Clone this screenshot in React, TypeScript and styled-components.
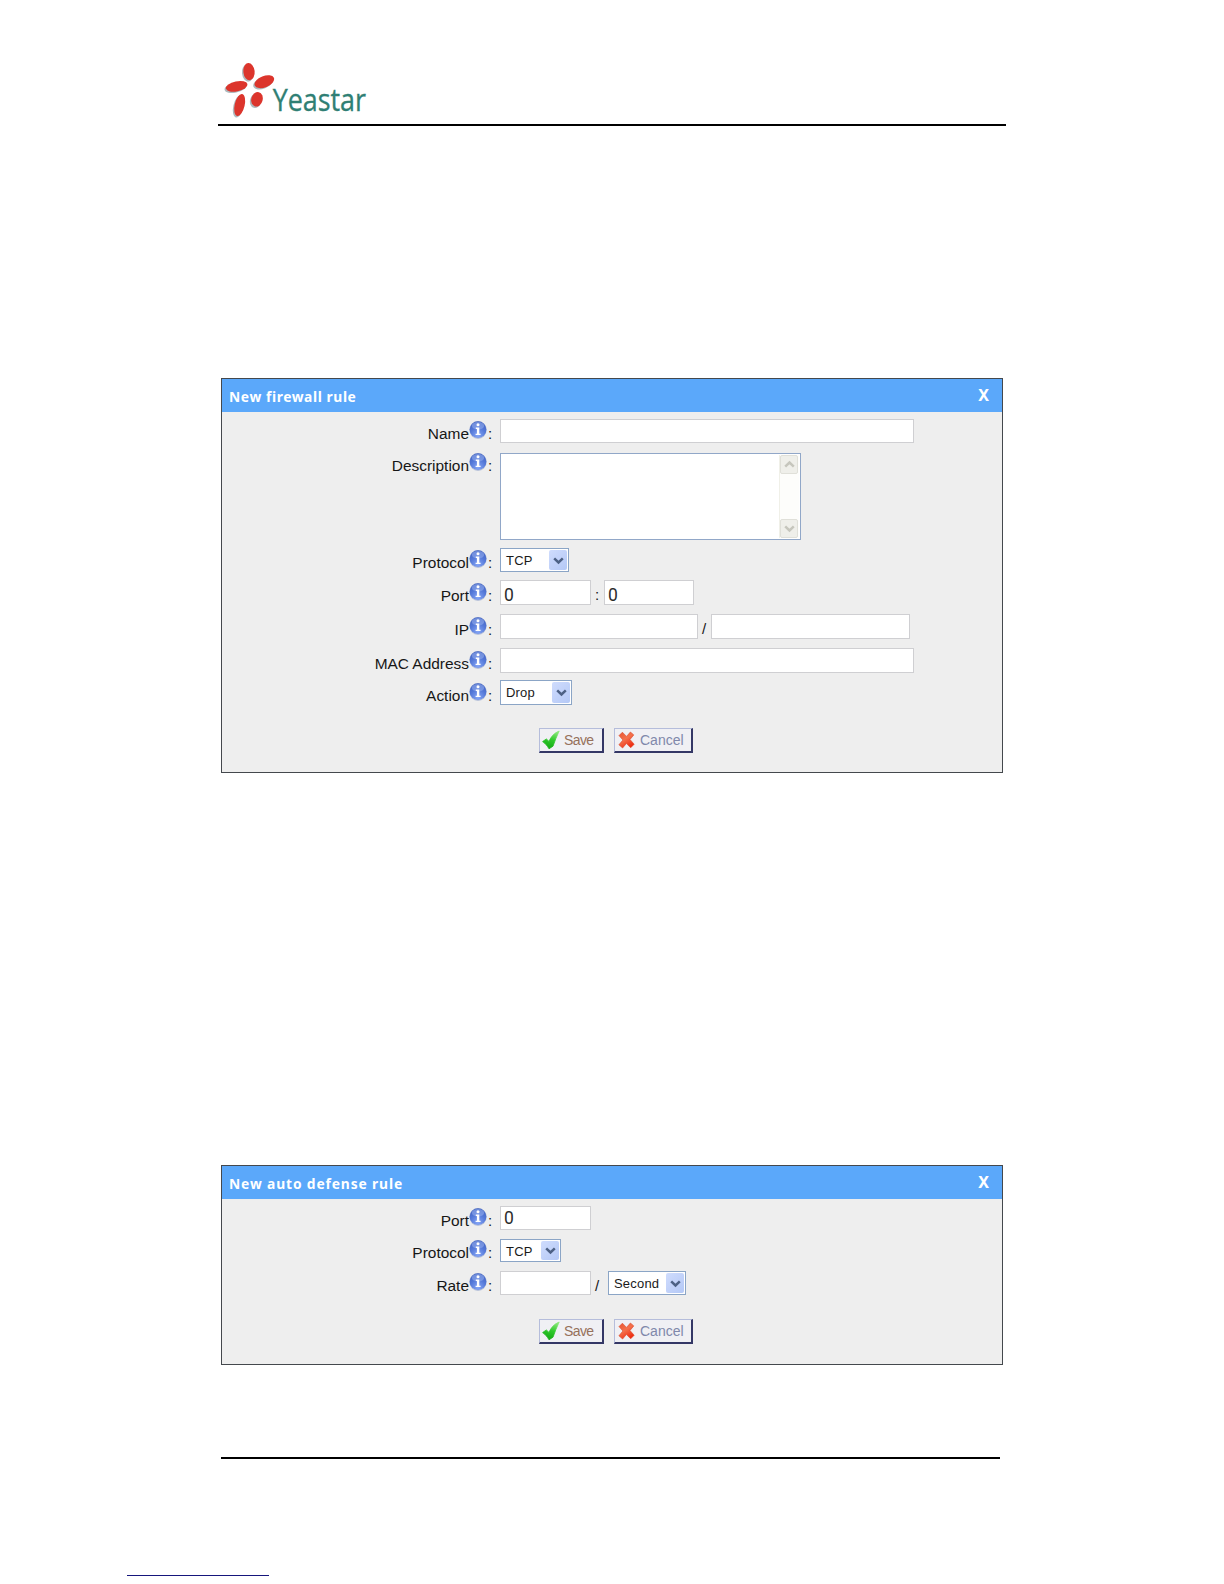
import React from 'react'
import styled, { createGlobalStyle } from 'styled-components'

interface Field {
  label: string
  // 行高度、下边距以及标签的垂直偏移
  height: number
  gap: number
  shift: number
  control: React.ReactNode
}

const InfoIcon = () => (
  <svg width="18" height="19" viewBox="0 0 18 19">
    <defs>
      <radialGradient id="infoFill" cx="0.5" cy="0.85" r="0.85">
        <stop offset="0" stopColor="#86a6f6" />
        <stop offset="0.55" stopColor="#5478d8" />
        <stop offset="1" stopColor="#4263c0" />
      </radialGradient>
    </defs>
    <ellipse cx="9" cy="10" rx="8.7" ry="8.9" fill="#b9c3da" />
    <circle cx="9" cy="9.6" r="8.4" fill="url(#infoFill)" />
    <ellipse cx="9" cy="5.8" rx="6.2" ry="3.9" fill="#9db5f2" opacity="0.5" />
    <circle cx="9" cy="4.8" r="1.5" fill="#fff" />
    <path d="M6.8 7.5h3.5v6.2h1.3v1.4H6.6v-1.4h1.3V8.9H6.8z" fill="#fff" />
  </svg>
)

const CheckIcon = () => (
  <svg width="18" height="20" viewBox="0 0 18 20">
    <defs>
      <linearGradient id="checkFill" x1="0.7" y1="0" x2="0.4" y2="1">
        <stop offset="0" stopColor="#8be87a" />
        <stop offset="0.5" stopColor="#2fc92b" />
        <stop offset="1" stopColor="#14a914" />
      </linearGradient>
    </defs>
    <path
      d="M0.6 11.6L4.3 8.9L7 11.4C8.8 7 12 3 17.2 1C14.8 6 12.8 11 11 16.2L7 18.8C5.4 15.9 3.2 13.4 0.6 11.6Z"
      fill="url(#checkFill)"
      stroke="url(#checkFill)"
      strokeWidth="0.8"
      strokeLinejoin="round"
    />
  </svg>
)

const CrossIcon = () => (
  <svg width="19" height="18" viewBox="-1 0 19 18">
    <defs>
      <linearGradient id="crossFill" x1="0" y1="0" x2="0.6" y2="1">
        <stop offset="0" stopColor="#e8532f" />
        <stop offset="0.5" stopColor="#f4714c" />
        <stop offset="1" stopColor="#ee2c12" />
      </linearGradient>
    </defs>
    <path
      d="M4.4 1.2L8.5 5.4L12.4 1L15.8 3.9L12 8.5L16.2 13.2L12.7 16.8L8.4 12.5L4.6 17L0.9 13.8L4.9 9L1 4.6Z"
      fill="url(#crossFill)"
      stroke="#d9482c"
      strokeWidth="0.6"
      strokeLinejoin="round"
    />
  </svg>
)

const Chevron = ({ up, color }: { up?: boolean; color: string }) => (
  <svg width="11" height="9" viewBox="0 0 11 9">
    <path d={up ? 'M1.2 6.6L5.5 2.5L9.8 6.6' : 'M1.2 2.4L5.5 6.5L9.8 2.4'} fill="none" stroke={color} strokeWidth="2.5" />
  </svg>
)

const Petals = () => (
  <>
    <ellipse cx="117" cy="65" rx="17" ry="26" transform="rotate(-6 117 65)" />
    <ellipse cx="163" cy="95" rx="31" ry="17" transform="rotate(-22 163 95)" />
    <ellipse cx="80" cy="109" rx="33" ry="15" transform="rotate(-12 80 109)" />
    <ellipse cx="89" cy="165" rx="15" ry="34" transform="rotate(13 89 165)" />
    <ellipse cx="141" cy="148" rx="17" ry="22" transform="rotate(15 141 148)" />
  </>
)

const Logo = () => (
  <LogoSvg width="180" height="74" viewBox="0 0 540 222">
    <g fill="#8d9da3" opacity="0.7" transform="translate(-4 4)">
      <Petals />
    </g>
    <g fill="#dc352c">
      <Petals />
    </g>
    <text
      x="188"
      y="182"
      fontFamily="'Open Sans', sans-serif"
      fontSize="93"
      fill="#2f7f74"
      stroke="#2f7f74"
      strokeWidth="1"
      textLength="280"
      lengthAdjust="spacingAndGlyphs"
    >
      Yeastar
    </text>
  </LogoSvg>
)

interface TextBoxProp {
  width: number
  height: number
  value?: string
  raised?: boolean
}
const TextBox = (prop: TextBoxProp) => (
  <TextInput $width={prop.width} $height={prop.height} $raised={prop.raised} type="text" defaultValue={prop.value} />
)

const Select = ({ value, width, height }: { value: string; width: number; height: number }) => (
  <SelectBox $width={width} $height={height}>
    <span>{value}</span>
    <SelectArrow>
      <Chevron color="#4d6185" />
    </SelectArrow>
  </SelectBox>
)

const DescriptionArea = () => (
  <AreaBox>
    <Area />
    <ScrollTrack>
      <ScrollButton>
        <Chevron up color="#c6c6bd" />
      </ScrollButton>
      <ScrollButton>
        <Chevron color="#c6c6bd" />
      </ScrollButton>
    </ScrollTrack>
  </AreaBox>
)

interface DialogProp {
  title: string
  spacing: number
  height: number
  fields: Field[]
}
const RuleDialog = (prop: DialogProp) => (
  <Dialog $height={prop.height}>
    <TitleBar>
      <Title $spacing={prop.spacing}>{prop.title}</Title>
      <CloseButton>X</CloseButton>
    </TitleBar>
    <Form>
      {prop.fields.map((field) => (
        <Row key={field.label} $height={field.height} $gap={field.gap}>
          <Label $shift={field.shift}>
            <LabelText>{field.label}</LabelText>
            <InfoIcon />
            <Colon>:</Colon>
          </Label>
          {field.control}
        </Row>
      ))}
      <Buttons>
        <Button $width={65} $color="#96705c" $spacing={-0.6}>
          <CheckIcon />
          Save
        </Button>
        <Button $width={79} $color="#8088ab" $spacing={0}>
          <CrossIcon />
          Cancel
        </Button>
      </Buttons>
    </Form>
  </Dialog>
)

const App = () => (
  <>
    <GlobalStyle />
    <Page>
      <Header>
        <Logo />
      </Header>
      <RuleDialog title="New firewall rule" spacing={0.6} height={395} fields={firewallFields} />
      <DialogGap />
      <RuleDialog title="New auto defense rule" spacing={0.87} height={200} fields={defenseFields} />
      <FooterRule />
      <LinkRule />
    </Page>
  </>
)

const GlobalStyle = createGlobalStyle`
  * {
    box-sizing: border-box;
  }
  body {
    margin: 0;
    background: #fff;
    font-family: 'Liberation Sans', Arial, sans-serif;
  }
  svg {
    display: block;
    flex-shrink: 0;
  }
`
const Page = styled.div`
  width: 1224px;
  height: 1584px;
  padding-top: 50px;
  overflow: hidden;
`
const Header = styled.header`
  width: 788px;
  margin: 0 0 252px 218px;
  border-bottom: 2px solid #000;
`
const LogoSvg = styled.svg`
  margin-left: -8px;
`
const Dialog = styled.section<{ $height: number }>`
  width: 782px;
  height: ${(props) => props.$height}px;
  margin-left: 221px;
  background: #eee;
  border: 1px solid #44484d;
`
const DialogGap = styled.div`
  height: 392px;
`
const TitleBar = styled.div`
  display: flex;
  justify-content: space-between;
  height: 33px;
  padding: 0 13px 0 7px;
  background: #5ba8fa;
  color: #fff;
`
const Title = styled.h2<{ $spacing: number }>`
  margin: 0;
  font: bold 13.8px/35px 'Noto Sans', sans-serif;
  letter-spacing: ${(props) => props.$spacing}px;
`
const CloseButton = styled.span`
  font: bold 16px/33px 'Noto Sans', sans-serif;
  cursor: pointer;
`
const Form = styled.div`
  padding-top: 7px;
`
const Row = styled.div<{ $height: number; $gap: number }>`
  display: flex;
  height: ${(props) => props.$height}px;
  margin-bottom: ${(props) => props.$gap}px;
`
const Label = styled.label<{ $shift: number }>`
  display: flex;
  justify-content: flex-end;
  width: 278px;
  height: 24px;
  margin-top: ${(props) => props.$shift}px;
  padding-right: 7px;
  color: #161616;
`
const LabelText = styled.span`
  font-size: 15.45px;
  line-height: 28px;
`
const Colon = styled.span`
  width: 6px;
  padding-left: 1px;
  font-size: 15px;
  line-height: 28px;
`
const TextInput = styled.input<{ $width: number; $height: number; $raised?: boolean }>`
  width: ${(props) => props.$width}px;
  height: ${(props) => props.$height}px;
  padding: ${(props) => (props.$raised ? '0 3px 1px' : '4px 3px 0')};
  border: 1px solid #cfcfd2;
  border-radius: 0;
  background: #fff;
  color: #2c2c2c;
  font: 17.5px Roboto, sans-serif;
  outline: none;
`
const Separator = styled.span<{ $width: number }>`
  width: ${(props) => props.$width}px;
  padding-left: 4px;
  font-size: 15px;
  line-height: 29px;
  color: #161616;
`
const SelectBox = styled.div<{ $width: number; $height: number }>`
  display: flex;
  justify-content: space-between;
  width: ${(props) => props.$width}px;
  height: ${(props) => props.$height}px;
  padding: 1px 1px 1px 5px;
  border: 1px solid #8ba5c6;
  background: #fff;
  color: #1a1a1a;
  font-size: 13px;
  line-height: 22px;
  letter-spacing: 0.2px;
`
const SelectArrow = styled.span`
  display: flex;
  align-items: center;
  justify-content: center;
  width: 18px;
  border-radius: 2px;
  background: linear-gradient(135deg, #cfdcfd, #b4c8f6);
`
const AreaBox = styled.div`
  display: flex;
  width: 301px;
  height: 87px;
  padding: 1px;
  border: 1px solid #91a7c8;
  background: #fff;
`
const Area = styled.textarea`
  flex: 1;
  min-width: 0;
  border: 0;
  padding: 2px;
  resize: none;
  outline: none;
  overflow: hidden;
`
const ScrollTrack = styled.div`
  display: flex;
  flex-direction: column;
  justify-content: space-between;
  width: 20px;
  padding-right: 1px;
  border-left: 1px solid #f0f0e8;
  background: #fdfdfb;
`
const ScrollButton = styled.span`
  display: flex;
  align-items: center;
  justify-content: center;
  height: 19px;
  border: 1px solid #e0e0d9;
  border-radius: 2px;
  background: #efefea;
`
const Buttons = styled.div`
  display: flex;
  gap: 10px;
  padding-left: 317px;
`
const Button = styled.button<{ $width: number; $color: string; $spacing: number }>`
  display: flex;
  align-items: center;
  gap: 4px;
  width: ${(props) => props.$width}px;
  height: 25px;
  padding: 0 0 0 2px;
  border: 1px solid;
  border-color: #b5bddb #343765 #343765 #b5bddb;
  border-bottom-width: 2px;
  border-right-width: 2px;
  background: #f0f0f4;
  color: ${(props) => props.$color};
  font: 14px 'Liberation Sans', sans-serif;
  letter-spacing: ${(props) => props.$spacing}px;
  white-space: nowrap;
`
const FooterRule = styled.div`
  width: 779px;
  height: 2px;
  margin: 92px 0 0 221px;
  background: #000;
`
const LinkRule = styled.div`
  width: 142px;
  height: 1px;
  margin: 116px 0 0 127px;
  background: #16167c;
`

const firewallFields: Field[] = [
  { label: 'Name', height: 24, gap: 10, shift: 1, control: <TextBox width={414} height={24} /> },
  { label: 'Description', height: 87, gap: 8, shift: -1, control: <DescriptionArea /> },
  { label: 'Protocol', height: 24, gap: 8, shift: 1, control: <Select value="TCP" width={69} height={24} /> },
  {
    label: 'Port',
    height: 25,
    gap: 9,
    shift: 2,
    control: (
      <>
        <TextBox width={91} height={25} value="0" />
        <Separator $width={13}>:</Separator>
        <TextBox width={90} height={25} value="0" />
      </>
    ),
  },
  {
    label: 'IP',
    height: 25,
    gap: 9,
    shift: 2,
    control: (
      <>
        <TextBox width={198} height={25} />
        <Separator $width={13}>/</Separator>
        <TextBox width={199} height={25} />
      </>
    ),
  },
  { label: 'MAC Address', height: 25, gap: 7, shift: 2, control: <TextBox width={414} height={25} /> },
  { label: 'Action', height: 25, gap: 23, shift: 2, control: <Select value="Drop" width={72} height={25} /> },
]

const defenseFields: Field[] = [
  { label: 'Port', height: 24, gap: 9, shift: 1, control: <TextBox width={91} height={24} value="0" raised /> },
  { label: 'Protocol', height: 23, gap: 9, shift: 0, control: <Select value="TCP" width={61} height={23} /> },
  {
    label: 'Rate',
    height: 24,
    gap: 24,
    shift: 1,
    control: (
      <>
        <TextBox width={91} height={24} />
        <Separator $width={17}>/</Separator>
        <Select value="Second" width={78} height={24} />
      </>
    ),
  },
]

export default App
